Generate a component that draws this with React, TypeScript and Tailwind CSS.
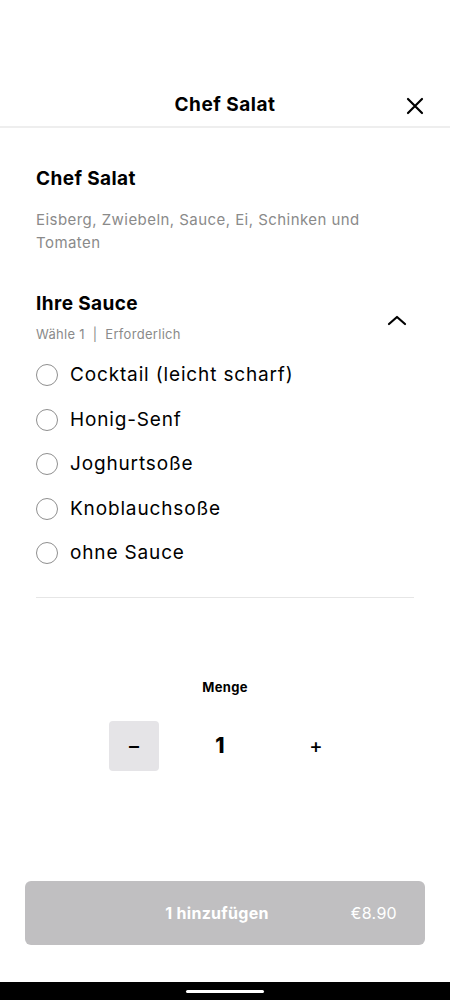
import React, { useState } from 'react';

const sauces = ['Cocktail (leicht scharf)', 'Honig-Senf', 'Joghurtsoße', 'Knoblauchsoße', 'ohne Sauce'];

export default function App() {
  const [qty, setQty] = useState(1);
  const [selected, setSelected] = useState<string | null>(null);

  return (
    <div className="w-[450px] h-[1000px] bg-white flex flex-col text-black" style={{ fontFamily: 'Inter, "Noto Sans", sans-serif' }}>
      <div className="h-[80px]" />
      <header className="h-[48px] pt-[4px] relative flex items-center justify-center border-b-2 border-[#eeeeee]">
        <h1 className="text-[19px] font-bold tracking-[0.5px]">Chef Salat</h1>
        <button className="absolute right-[26px] top-[17px]">
          <svg width="18" height="18" viewBox="0 0 18 18" fill="none" stroke="black" strokeWidth="2.2" strokeLinecap="round">
            <path d="M2 2L16 16M16 2L2 16" />
          </svg>
        </button>
      </header>

      <main className="flex-1 px-9 flex flex-col">
        <h2 className="mt-[39px] text-[19px] font-bold leading-6 tracking-[0.4px]">Chef Salat</h2>
        <p className="mt-[17px] text-[15px] leading-[23px] text-[#8a8a8a] pr-6 tracking-[0.45px]">
          Eisberg, Zwiebeln, Sauce, Ei, Schinken und Tomaten
        </p>

        <div className="mt-[38px] flex items-center justify-between">
          <div>
            <h3 className="text-[19px] font-bold leading-6 tracking-[0.4px]">Ihre Sauce</h3>
            <p className="mt-[10px] text-[13px] text-[#8a8a8a] leading-4 tracking-[0.3px]">Wähle 1&nbsp; | &nbsp;Erforderlich</p>
          </div>
          <svg width="20" height="12" viewBox="0 0 20 12" fill="none" stroke="black" strokeWidth="2.2" strokeLinecap="round" strokeLinejoin="round" className="mr-[7px] mt-[6px]">
            <path d="M2 10L10 3L18 10" />
          </svg>
        </div>

        <ul className="mt-[11px] flex flex-col">
          {sauces.map((s) => (
            <li key={s} className="h-[44.5px] flex items-center gap-3 cursor-pointer" onClick={() => setSelected(s)}>
              <span className="w-[22px] h-[22px] rounded-full border border-[#8f8f8f] flex items-center justify-center">
                {selected === s && <span className="w-3 h-3 rounded-full bg-black" />}
              </span>
              <span className="text-[19px] tracking-[0.85px]">{s}</span>
            </li>
          ))}
        </ul>

        <div className="mt-[21px] border-t border-[#e6e6e6]" />

        <div className="mt-[80px] flex flex-col items-center">
          <span className="text-[13px] font-bold tracking-[0.3px]">Menge</span>
          <div className="mt-[24px] self-start ml-[73px] flex items-center">
            <button className="w-[50px] h-[50px] rounded-[4px] bg-[#e5e4e7] text-[20px] font-medium flex items-center justify-center" onClick={() => setQty(Math.max(1, qty - 1))}>–</button>
            <span className="w-[122px] text-center text-[21px] font-extrabold">{qty}</span>
            <button className="w-[70px] h-[50px] text-[20px] font-medium flex items-center justify-center" onClick={() => setQty(qty + 1)}>+</button>
          </div>
        </div>
      </main>

      <div className="px-[25px] pb-[37px]">
        <button className="w-full h-[64px] rounded-[6px] bg-[#c0bfc1] flex items-center text-white relative">
          <span className="flex-1 text-center text-[16px] font-bold pr-[16px] tracking-[0.3px]">{qty} hinzufügen</span>
          <span className="absolute right-[28px] text-[16px] tracking-[0.3px]">€8.90</span>
        </button>
      </div>

      <div className="h-[18px] bg-black flex items-center justify-center">
        <div className="w-[78px] h-[3px] rounded-full bg-white" />
      </div>
    </div>
  );
}
